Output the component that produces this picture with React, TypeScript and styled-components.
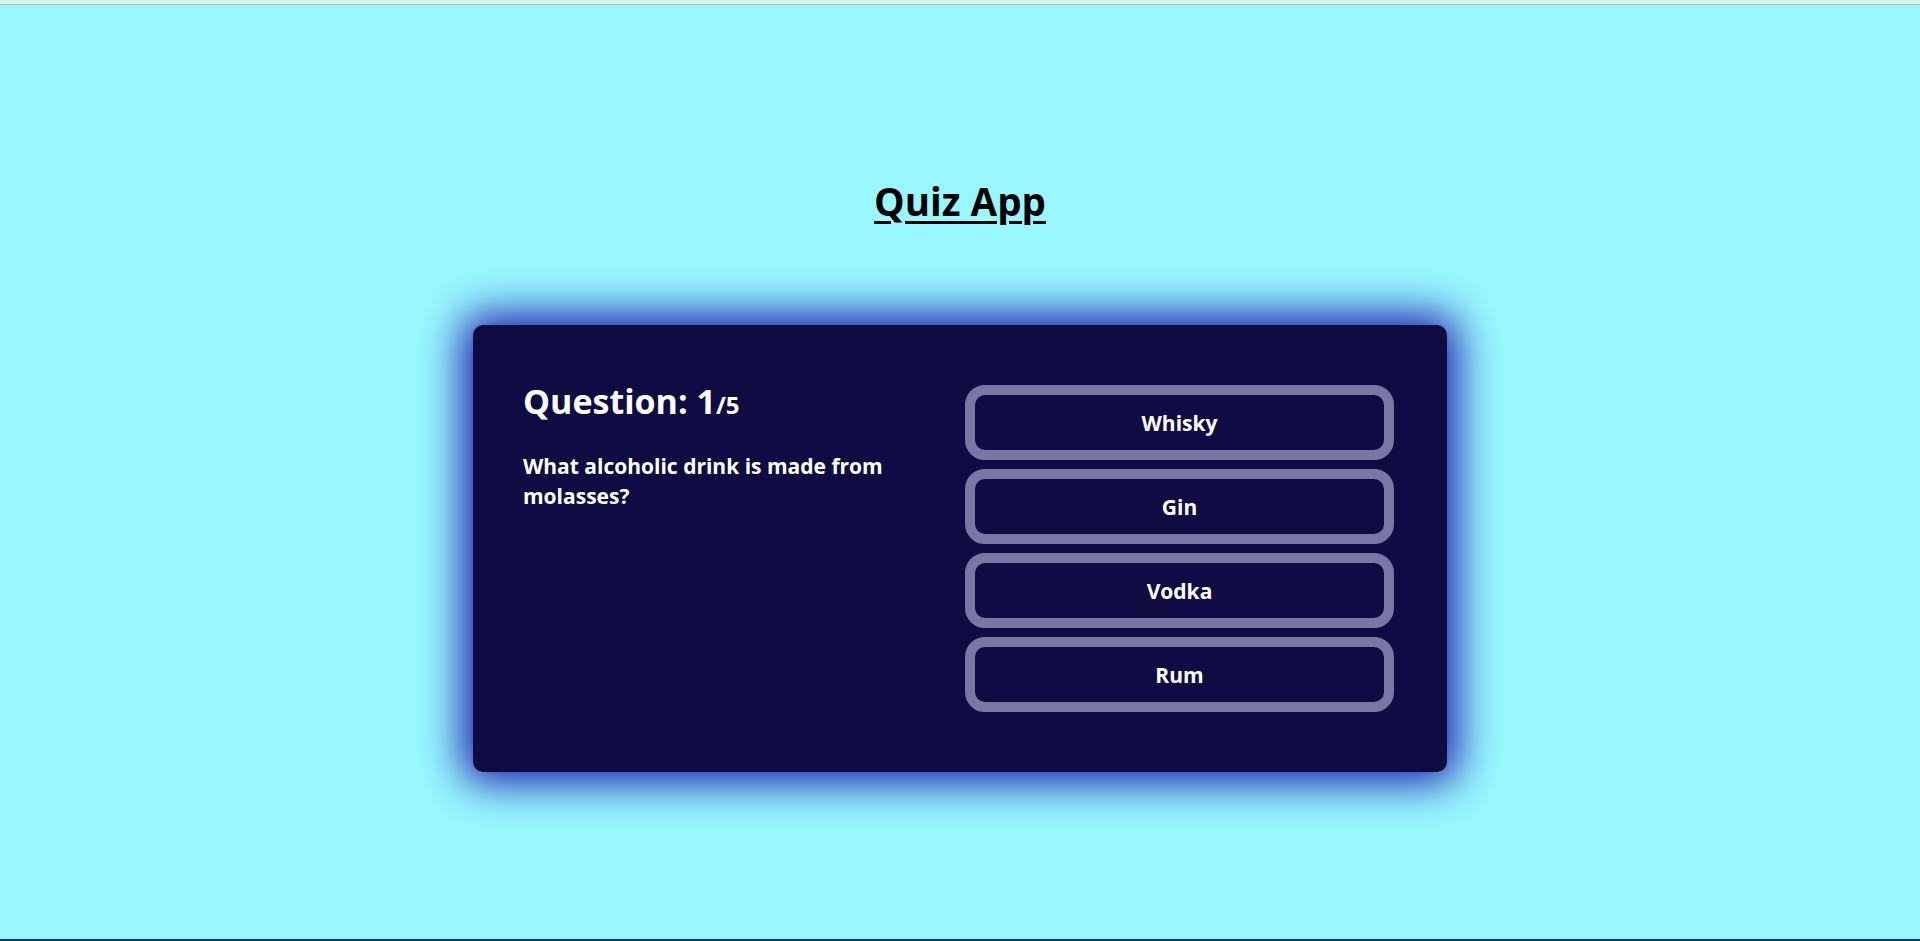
import React from 'react';
import styled, { createGlobalStyle } from 'styled-components';

const GlobalStyle = createGlobalStyle`
  html, body {
    margin: 0;
    padding: 0;
    background: #99f8ff;
  }
  body {
    font-family: "Open Sans", "Noto Sans", sans-serif;
  }
`;

const Page = styled.div`
  min-height: 100vh;
  display: flex;
  flex-direction: column;
  background: #99f8ff;
`;

const TopStrip = styled.div`
  height: 4px;
  background: #d9f6ec;
  border-bottom: 1px solid #a9c4bf;
`;

const BottomStrip = styled.div`
  height: 2px;
  background: #0c3a5c;
`;

const Main = styled.main`
  flex: 1;
  display: flex;
  flex-direction: column;
  align-items: center;
`;

const Title = styled.h1`
  margin: 172px 0 0;
  font-size: 38.5px;
  line-height: 49px;
  font-weight: 700;
  color: #000;
  text-decoration: underline;
  text-decoration-thickness: 3px;
  text-underline-offset: 5px;
`;

const Card = styled.section`
  margin-top: 99px;
  width: 974px;
  height: 447px;
  box-sizing: border-box;
  padding: 59px 53px 60px 50px;
  background: #0e0c42;
  border-radius: 10px;
  box-shadow: 0 0 44px 10px #1c14aa;
  display: flex;
  justify-content: space-between;
  color: #fff;
`;

const QuestionSection = styled.div`
  width: 390px;
`;

const QuestionCount = styled.div`
  font-size: 34px;
  line-height: 34px;
  font-weight: 700;
`;

const Total = styled.span`
  font-size: 24px;
`;

const QuestionText = styled.div`
  margin-top: 29px;
  font-size: 21px;
  line-height: 30px;
  font-weight: 700;
`;

const AnswerSection = styled.div`
  margin-top: 1px;
  width: 429px;
  display: flex;
  flex-direction: column;
  gap: 9px;
`;

const AnswerButton = styled.button`
  height: 75px;
  width: 100%;
  box-sizing: border-box;
  border: 10px solid #7877a5;
  border-radius: 20px;
  background: transparent;
  color: #fff;
  font-family: "Open Sans", "Noto Sans", sans-serif;
  font-size: 21px;
  font-weight: 700;
  cursor: pointer;
  display: flex;
  align-items: center;
  justify-content: center;
`;

const answers = ['Whisky', 'Gin', 'Vodka', 'Rum'];

export default function App() {
  return (
    <>
      <GlobalStyle />
      <Page>
        <TopStrip />
        <Main>
          <Title>Quiz App</Title>
          <Card>
            <QuestionSection>
              <QuestionCount>
                Question: 1<Total>/5</Total>
              </QuestionCount>
              <QuestionText>What alcoholic drink is made from molasses?</QuestionText>
            </QuestionSection>
            <AnswerSection>
              {answers.map((a) => (
                <AnswerButton key={a}>{a}</AnswerButton>
              ))}
            </AnswerSection>
          </Card>
        </Main>
        <BottomStrip />
      </Page>
    </>
  );
}
